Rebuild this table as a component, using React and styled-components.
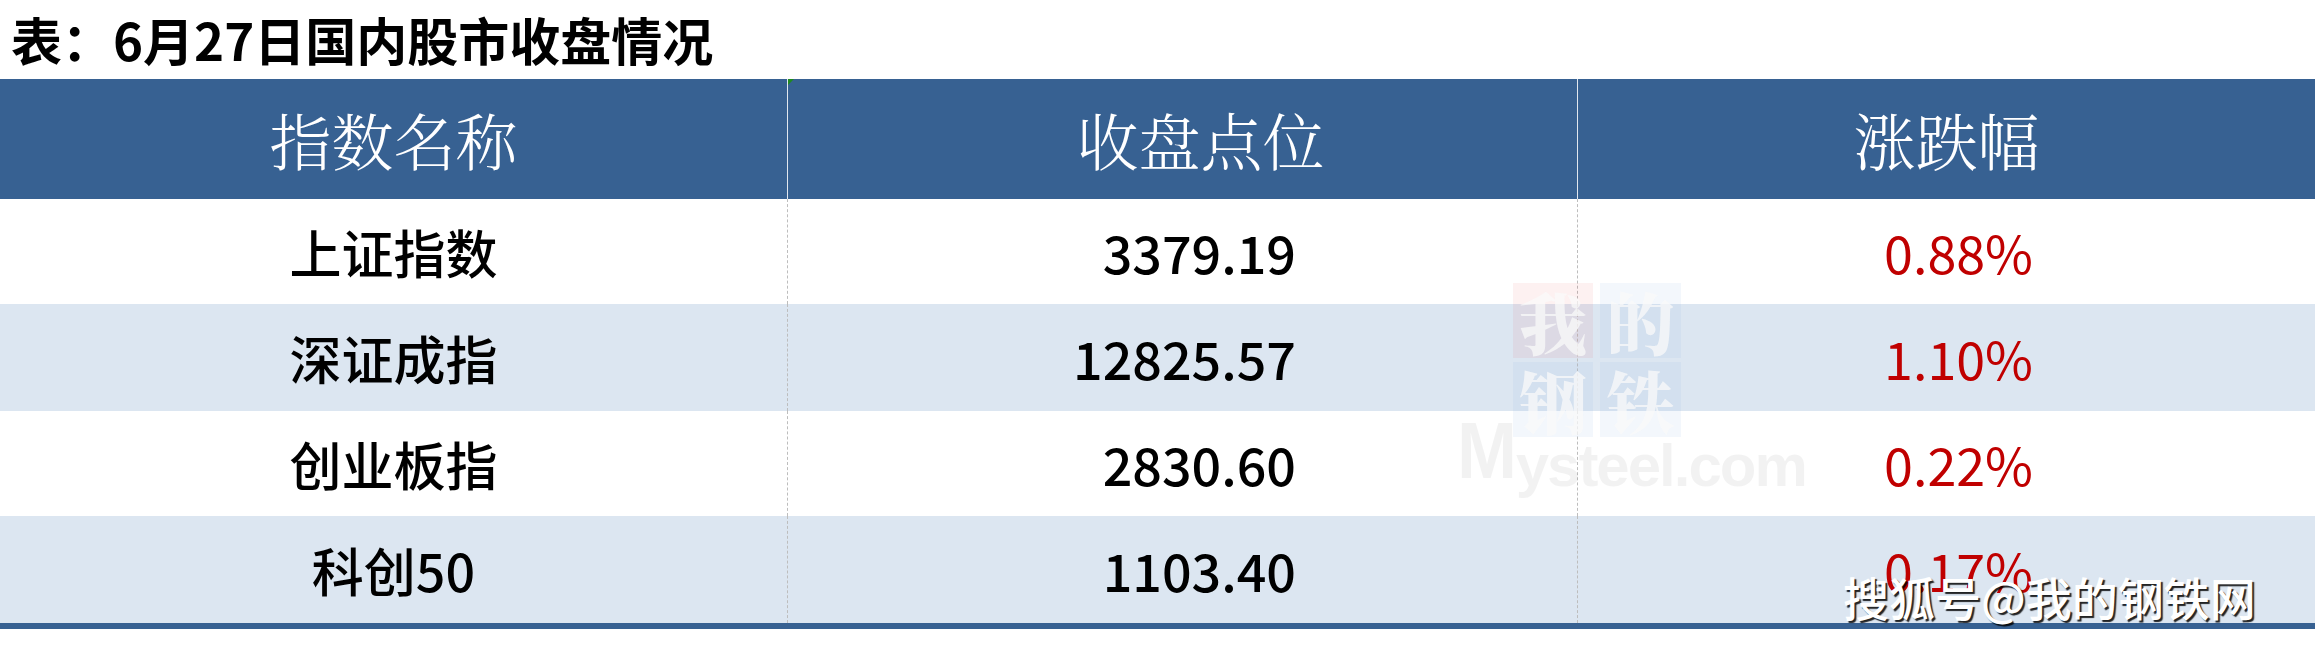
import React from 'react'
import styled, { createGlobalStyle } from 'styled-components'

const GlobalStyle = createGlobalStyle`
  html, body {
    margin: 0;
    padding: 0;
    background: #ffffff;
  }
  body {
    font-family: "Noto Sans CJK SC", "Noto Sans", sans-serif;
  }
`

const rows = [
  { name: '上证指数', close: '3379.19', change: '0.88%' },
  { name: '深证成指', close: '12825.57', change: '1.10%' },
  { name: '创业板指', close: '2830.60', change: '0.22%' },
  { name: '科创50', close: '1103.40', change: '0.17%' },
]

const rowHeights = [105, 107, 105, 107]

function App() {
  return (
    <>
      <GlobalStyle />
      <Page>
        <Title>表：6月27日国内股市收盘情况</Title>
        <Table>
          <HeadCell>指数名称</HeadCell>
          <HeadCell divider shift={36} flag>收盘点位</HeadCell>
          <HeadCell divider>涨跌幅</HeadCell>
          {rows.map((r, i) => (
            <React.Fragment key={r.name}>
              <Cell alt={i % 2 === 1} h={rowHeights[i]} align="center">{r.name}</Cell>
              <Cell alt={i % 2 === 1} h={rowHeights[i]} divider align="flex-end" padRight={281}>{r.close}</Cell>
              <Cell alt={i % 2 === 1} h={rowHeights[i]} divider align="flex-end" padRight={282} red>{r.change}</Cell>
            </React.Fragment>
          ))}
        </Table>

        <SteelMark>
          <MarkGrid>
            <MarkBox tint="rgba(230, 60, 60, 0.07)">我</MarkBox>
            <MarkBox>的</MarkBox>
            <MarkBox>钢</MarkBox>
            <MarkBox>铁</MarkBox>
          </MarkGrid>
          <MarkWord>
            <BigM>M</BigM>
            <span>ysteel.com</span>
          </MarkWord>
        </SteelMark>

        <SohuMark>搜狐号@我的钢铁网</SohuMark>
      </Page>
    </>
  )
}

export default App

const Page = styled.div`
  position: relative;
  width: 2315px;
  height: 647px;
  overflow: hidden;
  background: #ffffff;
`

const Title = styled.div`
  height: 79px;
  line-height: 79px;
  padding-left: 11px;
  font-family: "Noto Sans CJK SC", sans-serif;
  font-weight: 700;
  font-size: 51px;
  color: #000000;
  white-space: nowrap;
`

const Table = styled.div`
  display: grid;
  grid-template-columns: 787px 790px 738px;
  grid-template-rows: 120px;
  border-bottom: 6px solid #376192;
`

const HeadCell = styled.div`
  position: relative;
  display: flex;
  align-items: center;
  justify-content: center;
  padding-left: ${p => p.shift || 0}px;
  background: #376192;
  color: #ffffff;
  font-family: "Noto Serif CJK SC", "Noto Sans CJK SC", serif;
  font-weight: 300;
  font-size: 62px;
  border-left: ${p => (p.divider ? '1px solid rgba(255,255,255,0.85)' : 'none')};

  &::before {
    content: "";
    display: ${p => (p.flag ? 'block' : 'none')};
    position: absolute;
    left: 0;
    top: 0;
    border-top: 6px solid #1f8a1f;
    border-right: 6px solid transparent;
  }
`

const Cell = styled.div`
  height: ${p => p.h}px;
  display: flex;
  align-items: center;
  justify-content: ${p => p.align};
  padding-right: ${p => p.padRight || 0}px;
  background: ${p => (p.alt ? '#dce6f1' : '#ffffff')};
  color: ${p => (p.red ? '#c00000' : '#000000')};
  font-family: "Noto Sans CJK SC", sans-serif;
  font-weight: ${p => (p.red ? 400 : 500)};
  font-size: 52px;
  border-left: ${p => (p.divider ? '1px dashed #bdbdbd' : 'none')};
`

const SteelMark = styled.div`
  position: absolute;
  left: 1457px;
  top: 283px;
  display: flex;
  flex-direction: column;
  align-items: flex-start;
  pointer-events: none;
`

const MarkGrid = styled.div`
  display: grid;
  grid-template-columns: 80px 81px;
  grid-template-rows: 75px 75px;
  column-gap: 7px;
  row-gap: 4px;
  margin-left: 56px;
`

const MarkBox = styled.div`
  display: flex;
  align-items: center;
  justify-content: center;
  background: ${p => p.tint || 'rgba(120, 170, 225, 0.09)'};
  color: rgba(250, 250, 250, 0.75);
  font-family: "Noto Serif CJK SC", "Noto Sans CJK SC", serif;
  font-weight: 900;
  font-size: 68px;
  line-height: 1;
`

const MarkWord = styled.div`
  display: flex;
  align-items: baseline;
  margin-top: -18px;
  font-family: "Liberation Sans", Arial, sans-serif;
  font-weight: 700;
  font-size: 60px;
  line-height: 1;
  color: rgba(0, 0, 0, 0.05);
  letter-spacing: -2px;
`

const BigM = styled.span`
  font-size: 80px;
  position: relative;
  top: -8px;
  transform: scaleX(0.9);
  transform-origin: left;
  display: inline-block;
  margin-right: -6px;
`

const SohuMark = styled.div`
  position: absolute;
  left: 1843px;
  top: 573px;
  font-family: "Noto Sans CJK SC", sans-serif;
  font-weight: 500;
  font-size: 46px;
  line-height: 1;
  color: #ffffff;
  white-space: nowrap;
  text-shadow: 2px 2px 1px rgba(0, 0, 0, 0.85);
`
